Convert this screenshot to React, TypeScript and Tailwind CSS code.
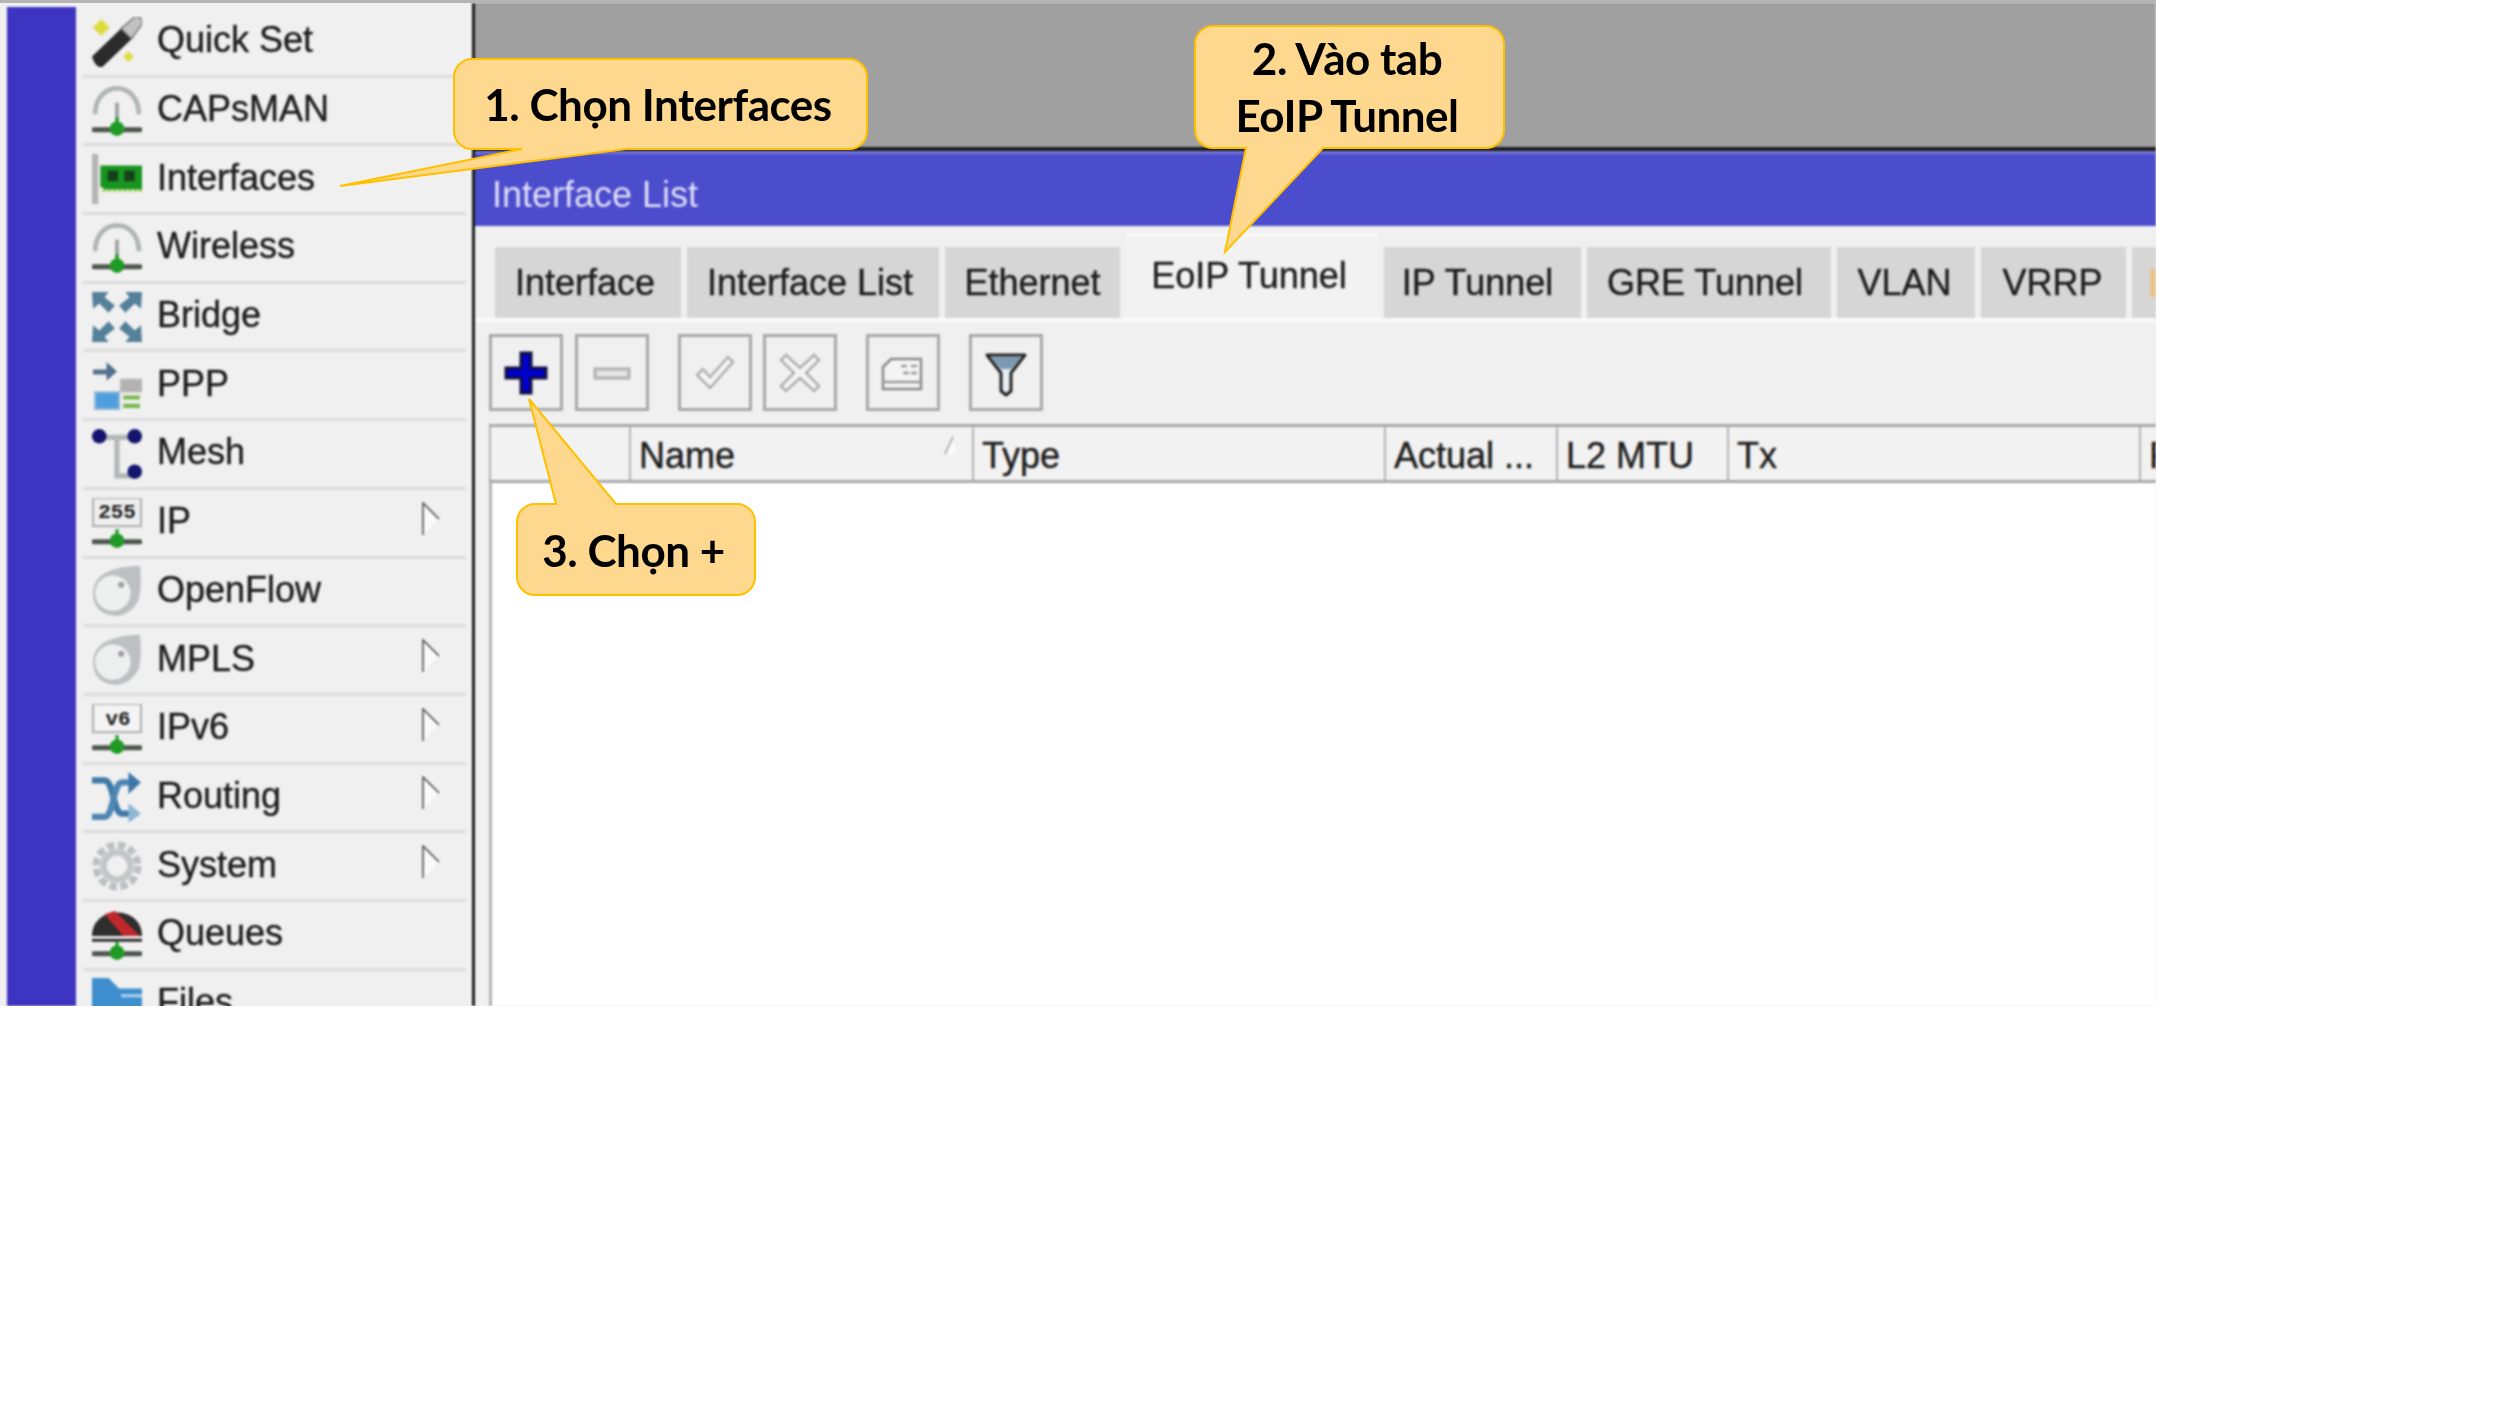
import type { ReactNode } from "react";

function Node() {
  return (
    <>
      <path d="M2 42h44" stroke="#2f3a2f" strokeWidth="5" strokeLinecap="round" opacity="0.85" />
      <circle cx="24" cy="41" r="7" fill="#1f9a24" />
      <path d="M24 30v6" stroke="#1f9a24" strokeWidth="3" />
    </>
  );
}

function Icon({ children }: { children: ReactNode }) {
  return (
    <svg viewBox="0 0 48 48" className="h-[50px] w-[50px] shrink-0">
      {children}
    </svg>
  );
}

const WirelessIcon = () => (
  <Icon>
    <path d="M3 27C3 -6 45 -6 45 27" fill="none" stroke="#b0b4b4" strokeWidth="4.5" />
    <path d="M24 16v22" stroke="#9a9e9e" strokeWidth="3.5" />
    <Node />
  </Icon>
);

const DiskIcon = () => (
  <Icon>
    <path d="M1 26C1 10 16 0 46 0q2 18-1 32-8 16-23 16Q1 46 1 26z" fill="#bcc0c0" />
    <circle cx="20" cy="26" r="17" fill="#eef0f0" />
    <circle cx="28" cy="18" r="3" fill="#a0a0a0" />
  </Icon>
);

const icons: Record<string, ReactNode> = {
  "Quick Set": (
    <Icon>
      <path d="M1 10l8-8 8 8-8 8z M30 38l5-5 5 5-5 5z" fill="#dcdc3c" />
      <path d="M0 38L28 11l10 10-28 27q-3 1-6-2t-4-8z" fill="#2b2b2b" />
      <path d="M28 11L41 0q4-1 6 2t0 6L38 21z" fill="#c2c2c2" stroke="#7c7c7c" strokeWidth="1.5" />
    </Icon>
  ),
  CAPsMAN: <WirelessIcon />,
  Interfaces: (
    <Icon>
      <rect x="0" y="0" width="6" height="48" fill="#b4b4b4" />
      <path d="M8 11h40v23H12l-2-2H8z" fill="#189420" />
      <rect x="15" y="16" width="10" height="10" fill="#15401a" />
      <rect x="31" y="16" width="10" height="10" fill="#15401a" />
      <path d="M10 35h38" stroke="#8fcf3a" strokeWidth="2.5" strokeDasharray="3 2" />
    </Icon>
  ),
  Wireless: <WirelessIcon />,
  Bridge: (
    <Icon>
      <g fill="#55809a">
        <path d="M0 0h16l-4 5 10 8-6 7-9-9-6 5z" />
        <path d="M48 0H32l4 5-10 8 6 7 9-9 6 5z" />
        <path d="M0 48h16l-4-5 10-8-6-7-9 9-6-5z" />
        <path d="M48 48H32l4-5-10-8 6-7 9 9 6-5z" />
      </g>
    </Icon>
  ),
  PPP: (
    <Icon>
      <path d="M1 9h13V2l10 9-10 9v-6H1z" fill="#516f8a" />
      <rect x="27" y="18" width="21" height="13" fill="#b5b2b2" />
      <rect x="3" y="31" width="23" height="16" fill="#4f9fdc" stroke="#8db7d6" strokeWidth="2" />
      <path d="M30 36h16M30 44h16" stroke="#76b84a" strokeWidth="4" />
    </Icon>
  ),
  Mesh: (
    <Icon>
      <path d="M10 8h31M24 8v37h16" fill="none" stroke="#b4b7b7" strokeWidth="5" />
      <circle cx="7" cy="7" r="7" fill="#14146e" />
      <circle cx="41" cy="7" r="7" fill="#14146e" />
      <circle cx="41" cy="41" r="7" fill="#14146e" />
    </Icon>
  ),
  IP: (
    <Icon>
      <rect x="1" y="0" width="46" height="27" fill="#eeeeee" stroke="#b0b0b0" strokeWidth="2" />
      <text x="24" y="19" textAnchor="middle" className="text-[20px] font-bold" fontFamily="Liberation Mono, monospace" fill="#222">
        255
      </text>
      <Node />
    </Icon>
  ),
  OpenFlow: <DiskIcon />,
  MPLS: <DiskIcon />,
  IPv6: (
    <Icon>
      <rect x="1" y="0" width="46" height="27" fill="#f4f4f4" stroke="#b0b0b0" strokeWidth="2" />
      <text x="25" y="20" textAnchor="middle" className="text-[20px] font-bold" fontFamily="Liberation Mono, monospace" fill="#222">
        v6
      </text>
      <Node />
    </Icon>
  ),
  Routing: (
    <Icon>
      <path d="M0 8h12c9 0 8 32 17 32h8" fill="none" stroke="#3f78a8" strokeWidth="6" />
      <path d="M0 43h12c9 0 8-33 17-33h8" fill="none" stroke="#4f86b4" strokeWidth="6" />
      <path d="M35 0l12 10-12 11z" fill="#3f78a8" />
      <path d="M35 30l12 10-12 9z" fill="#8db7d6" />
    </Icon>
  ),
  System: (
    <Icon>
      <circle cx="24" cy="24" r="20" fill="none" stroke="#bcc0c0" strokeWidth="7" strokeDasharray="7 3.5" />
      <circle cx="24" cy="24" r="13" fill="none" stroke="#c2c6c6" strokeWidth="6" />
    </Icon>
  ),
  Queues: (
    <Icon>
      <path d="M0 25C0 -5 48 -5 48 25z" fill="#2e2e2e" />
      <path d="M12 4l10-3 24 24H30z" fill="#c0282c" />
      <path d="M0 29h48" stroke="#2e2e2e" strokeWidth="3" />
      <Node />
    </Icon>
  ),
  Files: (
    <Icon>
      <path d="M0 0h16l10 10h22v38H0z" fill="#3f8fce" />
      <path d="M28 17h20" stroke="#a9d2ee" strokeWidth="3" />
    </Icon>
  ),
};

const menu = [
  { label: "Quick Set" },
  { label: "CAPsMAN" },
  { label: "Interfaces" },
  { label: "Wireless" },
  { label: "Bridge" },
  { label: "PPP" },
  { label: "Mesh" },
  { label: "IP", sub: true },
  { label: "OpenFlow" },
  { label: "MPLS", sub: true },
  { label: "IPv6", sub: true },
  { label: "Routing", sub: true },
  { label: "System", sub: true },
  { label: "Queues" },
  { label: "Files" },
];

const tabs = [
  { label: "Interface", w: "w-[186px]", text: "pr-[6px]" },
  { label: "Interface List", w: "w-[252px]", text: "pr-[6px]" },
  { label: "Ethernet", w: "w-[175px]", text: "" },
  { label: "EoIP Tunnel", w: "w-[252px]", text: "pr-[6px]", active: true },
  { label: "IP Tunnel", w: "w-[197px]", text: "pr-[10px]" },
  { label: "GRE Tunnel", w: "w-[244px]", text: "pr-[8px]" },
  { label: "VLAN", w: "w-[138px]", text: "pr-[3px]" },
  { label: "VRRP", w: "w-[145px]", text: "pr-[2px]" },
];

const columns = [
  { label: "", w: "w-[140px] shrink-0" },
  { label: "Name", w: "w-[343px] shrink-0", sort: true },
  { label: "Type", w: "w-[412px] shrink-0" },
  { label: "Actual ...", w: "w-[172px] shrink-0" },
  { label: "L2 MTU", w: "w-[171px] shrink-0" },
  { label: "Tx", w: "w-[412px] shrink-0" },
  { label: "F", w: "min-w-0 flex-1 overflow-hidden" },
];

function Tool({ children }: { children: ReactNode }) {
  return (
    <div className="flex h-[77px] w-[74px] items-center justify-center border-[3px] border-[#a8a8a8] bg-[#f0f0f0]">
      <svg viewBox="0 0 48 48" className="h-[48px] w-[48px]">
        {children}
      </svg>
    </div>
  );
}

function Callout({ box, path, children }: { box: string; path: string; children: ReactNode }) {
  return (
    <div className={`absolute flex flex-col items-center justify-center font-['Lato',sans-serif] text-[44px] font-bold tracking-[-0.5px] text-black ${box}`}>
      <svg className="absolute inset-0 h-full w-full overflow-visible">
        <path d={path} fill="#ffd88f" stroke="#ffc000" strokeWidth="2" />
      </svg>
      <div className="relative pr-[5px] text-center">{children}</div>
    </div>
  );
}

export default function App() {
  return (
    <div className="relative h-[1406px] w-[2500px] overflow-hidden bg-white font-['Liberation_Sans',sans-serif] text-[36px] text-[#1c1c1c]">
      <div className="h-[1006px] w-[2156px] overflow-hidden border-t-[3px] border-[#b4b4b4] bg-[#f0f0f0]">
        <div className="flex h-full blur-[0.8px] [-webkit-text-stroke:0.4px_#222]">
          <div className="w-[7px] shrink-0" />
          <div className="mt-[4px] w-[69px] shrink-0 bg-[#3d34c2]" />

          <div className="w-[396px] shrink-0 pt-[6px]">
            {menu.map((item) => (
              <div key={item.label} className="ml-[7px] mr-[6px] flex h-[68.7px] shrink-0 items-center border-b-[3px] border-[#dcdcdc]">
                <div className="ml-[9px]">{icons[item.label]}</div>
                <span className="ml-[15px] pb-[3px] leading-none">{item.label}</span>
                {item.sub && (
                  <svg viewBox="0 0 18 34" className="mb-[8px] ml-auto mr-[26px] h-[34px] w-[18px]">
                    <path d="M1 1l16 16L1 33z" fill="#fafafa" />
                    <path d="M1 33V1l16 16" fill="none" stroke="#444" strokeWidth="1.5" />
                  </svg>
                )}
              </div>
            ))}
          </div>

          <div className="w-[3px] shrink-0 bg-[#1c1c1c]" />

          <div className="flex min-w-0 flex-1 flex-col">
            <div className="h-[144px] shrink-0 border-t border-[#808080] bg-[#a0a0a0]" />
            <div className="h-[4px] shrink-0 bg-[#1c1c1c]" />
            <div className="flex h-[75px] shrink-0 items-center border-t-[3px] border-[#7676d8] bg-[#4c4dcc] pl-[17px] pt-[9px] text-[#dedef6] [-webkit-text-stroke:0px]">
              <span>Interface List</span>
            </div>

            <div className="mt-[7px] flex h-[85px] shrink-0 items-end gap-[6px] pl-[20px]">
              {tabs.map((tab) =>
                tab.active ? (
                  <div key={tab.label} className={`flex h-[85px] items-center justify-center border-t-[3px] border-[#fafafa] bg-[#f2f2f2] pb-[3px] ${tab.w} ${tab.text}`}>
                    {tab.label}
                  </div>
                ) : (
                  <div key={tab.label} className={`flex h-[71px] items-center justify-center bg-[#d6d6d6] ${tab.w} ${tab.text}`}>
                    {tab.label}
                  </div>
                ),
              )}
              <div className="flex h-[71px] w-[24px] items-center justify-end bg-[#d6d6d6]">
                <div className="h-[28px] w-[6px] bg-[#e6c48c]" />
              </div>
            </div>
            <div className="h-[4px] shrink-0 bg-[#fafafa]" />

            <div className="ml-[14px] mt-[12px] flex shrink-0 gap-[29px]">
              <div className="flex gap-[12px]">
                <Tool>
                  <path d="M19 4h10v15h15v10H29v15H19V29H4V19h15z" fill="#0000cc" stroke="#101040" strokeWidth="3" />
                </Tool>
                <Tool>
                  <rect x="7" y="20" width="34" height="9" fill="#e4e4e4" stroke="#b0b0b0" strokeWidth="3" />
                </Tool>
              </div>
              <div className="flex gap-[11px]">
                <Tool>
                  <path d="M6 26l6-6 7 8L37 8l5 5-23 26z" fill="#f4f4f4" stroke="#b0b0b0" strokeWidth="2.5" />
                </Tool>
                <Tool>
                  <path d="M10 6l14 13L38 6l5 5-13 13 13 13-5 5-14-13-14 13-5-5 13-13L5 11z" fill="#f4f4f4" stroke="#b0b0b0" strokeWidth="2.5" />
                </Tool>
              </div>
              <Tool>
                <path d="M12 10h30v30H4V18z" fill="#f4f4f4" stroke="#8a8a8a" strokeWidth="2.5" />
                <path d="M22 17h6M32 17h6M24 24h6M32 24h6M4 33h38" stroke="#9a9a9a" strokeWidth="2.5" />
              </Tool>
              <Tool>
                <path d="M5 6h38L29 24v18l-5 4-5-4V24z" fill="#e8eef2" stroke="#222" strokeWidth="3" strokeLinejoin="round" />
                <path d="M8 8h32L29 20H19z" fill="#7c99b2" />
              </Tool>
            </div>

            <div className="ml-[14px] mt-[13px] flex h-[59px] shrink-0 border-y-[3px] border-[#a8a8a8] bg-[#f2f2f2]">
              {columns.map((col, i) => (
                <div key={i} className={`relative flex items-center border-l-2 border-[#b4b4b4] pl-[8px] pt-[4px] ${col.w}`}>
                  {col.label}
                  {col.sort && (
                    <svg viewBox="0 0 14 20" className="absolute right-[14px] top-[8px] h-[20px] w-[14px]">
                      <path d="M1 19L9 2l3 17z" fill="#fcfcfc" />
                      <path d="M1 19L9 2" stroke="#999" strokeWidth="1.5" />
                    </svg>
                  )}
                </div>
              ))}
            </div>
            <div className="ml-[14px] flex-1 border-l-[3px] border-[#b4b4b4] bg-white" />
          </div>
        </div>
      </div>

      <Callout box="left-[454px] top-[59px] h-[90px] w-[413px]" path="M18 0H395A18 18 0 0 1 413 18V72A18 18 0 0 1 395 90H172L-114 127L68 90H18A18 18 0 0 1 0 72V18A18 18 0 0 1 18 0Z">
        1. Chọn Interfaces
      </Callout>
      <Callout box="left-[1195px] top-[26px] h-[122px] w-[309px]" path="M18 0H291A18 18 0 0 1 309 18V104A18 18 0 0 1 291 122H128L30 226L51 122H18A18 18 0 0 1 0 104V18A18 18 0 0 1 18 0Z">
        <div className="leading-[57px]">2. Vào tab</div>
        <div className="leading-[57px]">EoIP Tunnel</div>
      </Callout>
      <Callout box="left-[517px] top-[504px] h-[91px] w-[238px]" path="M18 0H39L12 -105L99 0H220A18 18 0 0 1 238 18V73A18 18 0 0 1 220 91H18A18 18 0 0 1 0 73V18A18 18 0 0 1 18 0Z">
        3. Chọn +
      </Callout>
    </div>
  );
}
